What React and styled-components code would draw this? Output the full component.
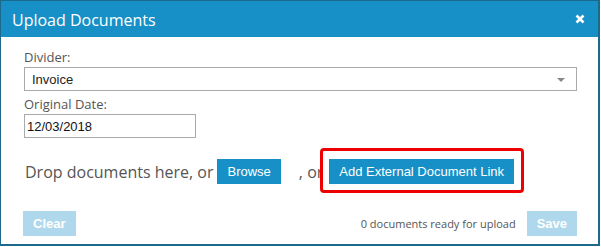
import React from "react";
import styled, { createGlobalStyle } from "styled-components";

const Global = createGlobalStyle`
  html, body { margin: 0; padding: 0; background: #ffffff; }
  * { box-sizing: border-box; }
`;

const Dialog = styled.div`
  width: 600px;
  height: 246px;
  border: 1px solid #1b6a8c;
  border-right-width: 2px;
  border-bottom-width: 2px;
  background: #ffffff;
  display: flex;
  flex-direction: column;
`;

const TitleBar = styled.div`
  height: 36px;
  background: #1790c7;
  display: flex;
  align-items: center;
  justify-content: space-between;
  padding: 0 13px 0 11px;
  color: #ffffff;
`;

const Title = styled.h1`
  margin: 0;
  font-family: "Open Sans", sans-serif;
  font-weight: 400;
  font-size: 16px;
  line-height: 20px;
  position: relative;
  top: 1px;
`;

const CloseButton = styled.button`
  border: 0;
  background: transparent;
  padding: 0;
  width: 11px;
  height: 11px;
  display: flex;
  align-items: center;
  justify-content: center;
  cursor: pointer;
`;

const Body = styled.div`
  flex: 1;
  display: flex;
  flex-direction: column;
  padding: 11px 21px 0 23px;
`;

const Label = styled.label`
  font-family: "Open Sans", sans-serif;
  font-size: 13px;
  line-height: 18px;
  color: #555555;
  margin-bottom: 1px;
`;

const SelectBox = styled.div`
  position: relative;
  height: 24px;
  border: 1px solid #aaaaaa;
  display: flex;
  align-items: center;
  padding-left: 7px;
  font-family: "Liberation Sans", Arial, sans-serif;
  font-size: 13px;
  color: #222222;
  margin-bottom: 4px;
`;

const Caret = styled.span`
  position: absolute;
  right: 11px;
  top: 10px;
  width: 0;
  height: 0;
  border-left: 4px solid transparent;
  border-right: 4px solid transparent;
  border-top: 4px solid #888888;
`;

const DateInput = styled.div`
  width: 172px;
  height: 24px;
  border: 1px solid #aaaaaa;
  display: flex;
  align-items: center;
  padding-left: 2px;
  font-family: "Liberation Sans", Arial, sans-serif;
  font-size: 13px;
  color: #111111;
`;

const DropRow = styled.div`
  display: flex;
  align-items: center;
  margin-top: 21px;
  height: 25px;
  font-family: "Open Sans", sans-serif;
  font-size: 16px;
  color: #555555;
`;

const DropText = styled.span`
  margin-right: ${(p) => p.$mr || 0}px;
  margin-left: ${(p) => p.$ml || 1}px;
  white-space: pre;
`;

const Button = styled.button`
  height: 25px;
  border: 0;
  padding: 0 ${(p) => p.$px || 10}px;
  background: ${(p) => (p.$disabled ? "#b0d8ec" : "#1790c7")};
  color: #ffffff;
  font-family: "Liberation Sans", Arial, sans-serif;
  font-size: 13px;
  font-weight: ${(p) => (p.$bold ? 700 : 400)};
  cursor: pointer;
  position: relative;
  z-index: 1;
`;

const Highlight = styled.span`
  position: relative;
  display: inline-flex;
  &::before {
    content: "";
    position: absolute;
    left: -9px;
    right: -10px;
    top: -11px;
    bottom: -9px;
    border: 3px solid #ee0000;
    border-radius: 4px;
    background: #ffffff;
  }
`;

const Footer = styled.div`
  display: flex;
  align-items: center;
  margin-top: 27px;
  margin-left: -1px;
`;

const Counter = styled.span`
  margin-left: auto;
  margin-right: 11px;
  font-family: "Open Sans", sans-serif;
  font-size: 11px;
  color: #555555;
`;

export default function App() {
  return (
    <>
      <Global />
      <Dialog>
        <TitleBar>
          <Title>Upload Documents</Title>
          <CloseButton aria-label="Close">
            <svg width="10" height="10" viewBox="0 0 10 10">
              <path d="M1.5 1.5 L8.5 8.5 M8.5 1.5 L1.5 8.5" stroke="#ffffff" strokeWidth="2.6" />
            </svg>
          </CloseButton>
        </TitleBar>
        <Body>
          <Label>Divider:</Label>
          <SelectBox>
            Invoice
            <Caret />
          </SelectBox>
          <Label>Original Date:</Label>
          <DateInput>12/03/2018</DateInput>
          <DropRow>
            <DropText $mr={4}>Drop documents here, or</DropText>
            <Button>Browse</Button>
            <DropText $ml={18} $mr={6}>, or</DropText>
            <Highlight>
              <Button>Add External Document Link</Button>
            </Highlight>
          </DropRow>
          <Footer>
            <Button $disabled $bold>Clear</Button>
            <Counter>0 documents ready for upload</Counter>
            <Button $disabled $bold>Save</Button>
          </Footer>
        </Body>
      </Dialog>
    </>
  );
}
